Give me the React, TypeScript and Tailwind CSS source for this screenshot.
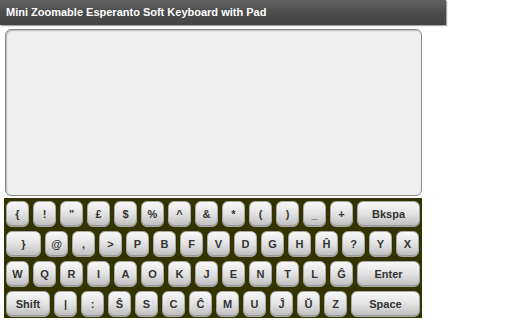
import React from 'react';

// Keyboard layout, row by row. w = key width in px (default 23).
type Key = { label: string; w?: number };

const rows: Key[][] = [
  [
    { label: '{' }, { label: '!' }, { label: '"' }, { label: '£' }, { label: '$' },
    { label: '%' }, { label: '^' }, { label: '&' }, { label: '*' }, { label: '(' },
    { label: ')' }, { label: '_' }, { label: '+' }, { label: 'Bkspa', w: 63 },
  ],
  [
    { label: '}', w: 35 }, { label: '@' }, { label: ',' }, { label: '>' }, { label: 'P' },
    { label: 'B' }, { label: 'F' }, { label: 'V' }, { label: 'D' }, { label: 'G' },
    { label: 'H' }, { label: 'Ĥ' }, { label: '?' }, { label: 'Y' }, { label: 'X' },
  ],
  [
    { label: 'W' }, { label: 'Q' }, { label: 'R' }, { label: 'I' }, { label: 'A' },
    { label: 'O' }, { label: 'K' }, { label: 'J' }, { label: 'E' }, { label: 'N' },
    { label: 'T' }, { label: 'L' }, { label: 'Ĝ' }, { label: 'Enter', w: 63 },
  ],
  [
    { label: 'Shift', w: 44 }, { label: '|' }, { label: ':' }, { label: 'Ŝ' }, { label: 'S' },
    { label: 'C' }, { label: 'Ĉ' }, { label: 'M' }, { label: 'U' }, { label: 'Ĵ' },
    { label: 'Ŭ' }, { label: 'Z' }, { label: 'Space', w: 69 },
  ],
];

const KeyButton = ({ k }: { k: Key }) => (
  <div
    className="h-[26px] shrink-0 flex items-center justify-center rounded-[6px] border border-[#a8a8a8] bg-gradient-to-b from-[#f8f8f8] via-[#e2e2e2] to-[#bdbdbd] text-[11px] font-bold text-[#333] shadow-[inset_0_-1px_0_#999]"
    style={{ width: k.w ?? 23 }}
  >
    {k.label}
  </div>
);

export default function App() {
  return (
    <div className="w-[512px] h-[320px] bg-white font-['Liberation_Sans',Arial,sans-serif] overflow-hidden">
      <div className="w-[446px] h-[25px] flex items-center pl-[6px] bg-gradient-to-b from-[#626262] via-[#4b4b4b] to-[#444] text-white text-[11px] font-bold shadow-[1px_1px_1px_rgba(0,0,0,0.35)]">
        Mini Zoomable Esperanto Soft Keyboard with Pad
      </div>

      <div className="ml-[5px] mt-[4px] w-[417px] h-[167px] rounded-[6px] border border-[#8a8a8a] bg-[#efefef] shadow-[inset_1px_1px_1px_#bbb]" />

      <div className="ml-[4px] mt-[2px] w-[418px] h-[120px] bg-[#333300] px-[2px] pt-[3px] flex flex-col gap-[4px]">
        {rows.map((row, i) => (
          <div key={i} className="flex gap-[4px]">
            {row.map((k, j) => (
              <KeyButton key={j} k={k} />
            ))}
          </div>
        ))}
      </div>
    </div>
  );
}
